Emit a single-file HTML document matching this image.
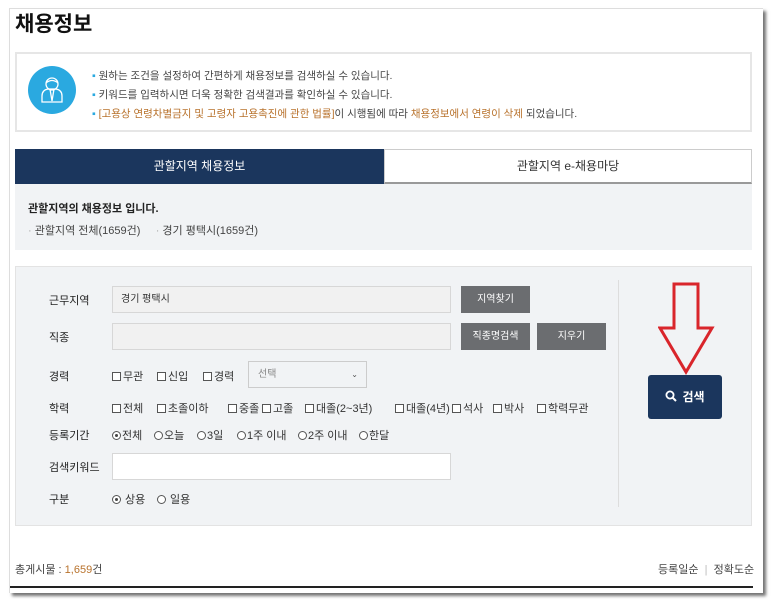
<!DOCTYPE html>
<html><head><meta charset="utf-8"><style>
*{margin:0;padding:0;box-sizing:border-box}
body{width:771px;height:600px;background:#fff;position:relative;overflow:hidden;font-family:"Liberation Sans","Noto Sans CJK KR",sans-serif;color:#333}
.frame{position:absolute;left:9px;top:8px;width:754px;height:585px;background:#fff;border-left:1px solid #ddd;border-top:1px solid #ddd;box-shadow:3px 3px 3px rgba(0,0,0,.55)}
.a{position:absolute}
.t{font-size:11px;white-space:nowrap}
.lbl{position:absolute;left:49px;font-size:11px;color:#222}
.inp{position:absolute;background:#f1f1f1;border:1px solid #d7d7d7}
.btn{position:absolute;background:#6b6d70;color:#fff;font-size:10px;text-align:center;line-height:27px}
.opt{position:absolute;font-size:11px;color:#333;white-space:nowrap}
.cb{display:inline-block;width:9px;height:9px;border:1px solid #555;background:#fff;vertical-align:-1px;margin-right:2px}
.rd{display:inline-block;width:9px;height:9px;border:1px solid #555;border-radius:50%;background:#fff;vertical-align:-1px;margin-right:1px;position:relative}
.rd.on::after{content:"";position:absolute;left:2px;top:2px;width:3px;height:3px;border-radius:50%;background:#444}
.or{color:#b8722c}
</style></head><body>
<div class="frame"></div>
<div class="a" style="left:15px;top:8px;font-size:21px;font-weight:bold;color:#111">채용정보</div>
<div class="a" style="left:15px;top:52px;width:737px;height:80px;border:2px solid #e6e6e6"></div>
<div class="a" style="left:28px;top:66px;width:48px;height:48px;border-radius:50%;background:#2aa9e0"></div>
<svg class="a" style="left:28px;top:66px" width="48" height="48" viewBox="0 0 48 48" fill="none" stroke="#fff" stroke-width="1.3"><circle cx="24" cy="18" r="6"/><path d="M18 17q6-5 12 0"/><path d="M14 36v-6q0-6 6-7h8q6 1 6 7v6z"/><path d="M22 23l2 12 2-12"/></svg>
<div class="a t" style="left:92px;top:67px;line-height:19px;color:#444;font-size:10.5px">
<div><span style="color:#2aa9e0">▪</span> 원하는 조건을 설정하여 간편하게 채용정보를 검색하실 수 있습니다.</div>
<div><span style="color:#2aa9e0">▪</span> 키워드를 입력하시면 더욱 정확한 검색결과를 확인하실 수 있습니다.</div>
<div><span style="color:#2aa9e0">▪</span> <span class="or">[고용상 연령차별금지 및 고령자 고용촉진에 관한 법률]</span>이 시행됨에 따라 <span class="or">채용정보에서 연령이 삭제</span> 되었습니다.</div>
</div>
<div class="a" style="left:15px;top:149px;width:369px;height:35px;background:#1b365d;color:#fff;font-size:12px;text-align:center;line-height:35px">관할지역 채용정보</div>
<div class="a" style="left:384px;top:149px;width:368px;height:35px;border:1px solid #ccc;border-bottom:2px solid #999;font-size:12px;text-align:center;line-height:33px;color:#333">관할지역 e-채용마당</div>
<div class="a" style="left:15px;top:184px;width:737px;height:66px;background:#f1f3f5"></div>
<div class="a t" style="left:28px;top:200px;font-weight:bold;color:#222">관할지역의 채용정보 입니다.</div>
<div class="a t" style="left:28px;top:222px;color:#444"><span style="color:#aaa">·</span> 관할지역 전체(1659건) &nbsp;&nbsp;&nbsp;&nbsp;<span style="color:#aaa">·</span> 경기 평택시(1659건)</div>
<div class="a" style="left:15px;top:266px;width:737px;height:260px;background:#f1f3f5;border:1px solid #e3e3e3"></div>
<div class="a" style="left:618px;top:280px;width:1px;height:227px;background:#ddd"></div>
<div class="lbl" style="top:292px">근무지역</div>
<div class="inp" style="left:112px;top:286px;width:339px;height:27px;font-size:10px;line-height:25px;padding-left:8px;color:#333">경기 평택시</div>
<div class="btn" style="left:461px;top:286px;width:69px">지역찾기</div>
<div class="lbl" style="top:329px">직종</div>
<div class="inp" style="left:112px;top:323px;width:339px;height:27px"></div>
<div class="btn" style="left:461px;top:323px;width:69px">직종명검색</div>
<div class="btn" style="left:537px;top:323px;width:69px">지우기</div>
<div class="lbl" style="top:368px">경력</div>
<div class="opt" style="left:112px;top:368px"><span class="cb"></span>무관</div>
<div class="opt" style="left:157px;top:368px"><span class="cb"></span>신입</div>
<div class="opt" style="left:203px;top:368px"><span class="cb"></span>경력</div>
<div class="a" style="left:248px;top:361px;width:119px;height:27px;border:1px solid #ccc;background:#f1f3f5;font-size:10px;color:#888;line-height:25px;padding-left:9px">선택<span style="position:absolute;right:8px;font-size:8px;color:#555">⌄</span></div>
<div class="lbl" style="top:400px">학력</div>
<div class="opt" style="left:112px;top:400px"><span class="cb"></span>전체</div>
<div class="opt" style="left:157px;top:400px"><span class="cb"></span>초졸이하</div>
<div class="opt" style="left:228px;top:400px"><span class="cb"></span>중졸</div>
<div class="opt" style="left:262px;top:400px"><span class="cb"></span>고졸</div>
<div class="opt" style="left:305px;top:400px"><span class="cb"></span>대졸(2~3년)</div>
<div class="opt" style="left:395px;top:400px"><span class="cb"></span>대졸(4년)</div>
<div class="opt" style="left:452px;top:400px"><span class="cb"></span>석사</div>
<div class="opt" style="left:493px;top:400px"><span class="cb"></span>박사</div>
<div class="opt" style="left:537px;top:400px"><span class="cb"></span>학력무관</div>
<div class="lbl" style="top:427px">등록기간</div>
<div class="opt" style="left:112px;top:427px"><span class="rd on"></span>전체</div>
<div class="opt" style="left:154px;top:427px"><span class="rd"></span>오늘</div>
<div class="opt" style="left:197px;top:427px"><span class="rd"></span>3일</div>
<div class="opt" style="left:237px;top:427px"><span class="rd"></span>1주 이내</div>
<div class="opt" style="left:298px;top:427px"><span class="rd"></span>2주 이내</div>
<div class="opt" style="left:359px;top:427px"><span class="rd"></span>한달</div>
<div class="lbl" style="top:459px">검색키워드</div>
<div class="inp" style="left:112px;top:453px;width:339px;height:27px;background:#fff"></div>
<div class="lbl" style="top:491px">구분</div>
<div class="opt" style="left:112px;top:491px"><span class="rd on"></span> 상용</div>
<div class="opt" style="left:157px;top:491px"><span class="rd"></span> 일용</div>
<svg class="a" style="left:658px;top:282px" width="58" height="94" viewBox="0 0 58 94"><path d="M16 2H40V46H54L28 90 2 46H16Z" fill="none" stroke="#d9252b" stroke-width="3" stroke-linejoin="miter"/></svg>
<div class="a" style="left:648px;top:375px;width:74px;height:44px;background:#1b365d;border-radius:3px;color:#fff;font-size:12px;line-height:44px;text-align:center;font-weight:bold"><svg width="12" height="12" viewBox="0 0 12 12" style="vertical-align:-1px;margin-right:5px"><circle cx="5" cy="5" r="3.6" fill="none" stroke="#fff" stroke-width="1.8"/><path d="M7.5 7.5L11 11" stroke="#fff" stroke-width="2"/></svg>검색</div>
<div class="a t" style="left:15px;top:561px;color:#444">총게시물 : <span class="or">1,659</span>건</div>
<div class="a t" style="left:658px;top:561px;color:#444">등록일순 <span style="color:#bbb">&nbsp;|&nbsp;</span> 정확도순</div>
<div class="a" style="left:10px;top:586px;width:743px;height:2px;background:#222"></div>
</body></html>
